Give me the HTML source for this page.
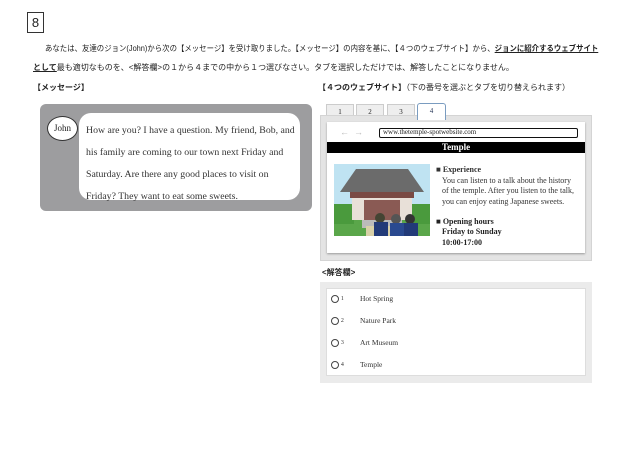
<!DOCTYPE html>
<html><head><meta charset="utf-8"><style>
*{margin:0;padding:0;box-sizing:border-box}
body{width:640px;height:453px;background:#fff;position:relative;overflow:hidden;font-family:"Liberation Sans","Noto Sans CJK JP",sans-serif;color:#222}
.a{position:absolute}
.jp{font-size:8px;white-space:nowrap;line-height:10px}
.serif{font-family:"Liberation Serif","Noto Serif CJK SC",serif}
.row{height:22px;line-height:12px;position:relative}
.rd{display:inline-block;width:8px;height:8px;border:1px solid #444;border-radius:50%;vertical-align:-1px}
</style></head><body>
<div class="a" style="left:27px;top:12px;width:17px;height:21px;border:1px solid #333;font-size:13px;line-height:19px;text-align:center">8</div>
<div class="a jp" style="left:45px;top:44px;transform:scaleX(0.925);transform-origin:0 0">あなたは、友達のジョン(John)から次の【メッセージ】を受け取りました。【メッセージ】の内容を基に、【４つのウェブサイト】から、<b style="text-decoration:underline">ジョンに紹介するウェブサイト</b></div>
<div class="a jp" style="left:33px;top:63px"><b style="text-decoration:underline">として</b>最も適切なものを、&lt;解答欄&gt;の１から４までの中から１つ選びなさい。タブを選択しただけでは、解答したことになりません。</div>
<div class="a jp" style="left:33px;top:83px;font-weight:bold">【メッセージ】</div>
<div class="a jp" style="left:318px;top:83px"><b>【４つのウェブサイト】</b>（下の番号を選ぶとタブを切り替えられます）</div>

<div class="a" style="left:40px;top:104px;width:272px;height:107px;background:#9d9d9f;border-radius:6px"></div>
<div class="a" style="left:79px;top:113px;width:221px;height:87px;background:#fff;border-radius:12px"></div>
<div class="a serif" style="left:47px;top:116px;width:31px;height:25px;background:#fff;border:1px solid #333;border-radius:50%;font-size:9px;line-height:23px;text-align:center">John</div>
<div class="a serif" style="left:86px;top:120px;font-size:9.8px;line-height:22px;color:#333;white-space:nowrap">How are you? I have a question. My friend, Bob, and<br>his family are coming to our town next Friday and<br>Saturday. Are there any good places to visit on<br>Friday? They want to eat some sweets.</div>

<div class="a serif" style="left:326px;top:104px;width:28px;height:14px;background:#eee;border:1px solid #ccc;border-bottom:none;font-size:7px;text-align:center;line-height:14px">1</div>
<div class="a serif" style="left:356px;top:104px;width:28px;height:14px;background:#eee;border:1px solid #ccc;border-bottom:none;font-size:7px;text-align:center;line-height:14px">2</div>
<div class="a serif" style="left:387px;top:104px;width:28px;height:14px;background:#eee;border:1px solid #ccc;border-bottom:none;font-size:7px;text-align:center;line-height:14px">3</div>
<div class="a" style="left:320px;top:115px;width:272px;height:146px;background:#e4e4e4;border:1px solid #d4d4d4"></div>
<div class="a serif" style="left:417px;top:103px;width:29px;height:17px;background:#fff;border:1px solid #7a9cc0;border-bottom:none;border-radius:3px 3px 0 0;font-size:7px;text-align:center;line-height:14px;color:#235">4</div>
<div class="a" style="left:327px;top:122px;width:258px;height:131px;background:#fff;box-shadow:0 1px 2px #999"></div>
<div class="a" style="left:340px;top:127px;font-size:9px;color:#bbb">←&nbsp;&nbsp;→</div>
<div class="a serif" style="left:379px;top:128px;width:199px;height:10px;border:1.5px solid #111;border-radius:2px;font-size:7px;line-height:7px;padding-left:3px">www.thetemple-spotwebsite.com</div>
<div class="a serif" style="left:327px;top:142px;width:258px;height:11px;background:#000;color:#fff;font-weight:bold;font-size:9px;line-height:11px;text-align:center">Temple</div>
<svg class="a" style="left:334px;top:164px" width="96" height="72" viewBox="0 0 96 72">
<rect width="96" height="72" fill="#bfe3f2"/>
<rect y="45" width="96" height="27" fill="#5aa64a"/>
<rect x="0" y="40" width="20" height="20" fill="#4a9a3d"/><rect x="78" y="40" width="18" height="20" fill="#4a9a3d"/>
<polygon points="22,5 74,5 90,28 6,28" fill="#6b6b6b"/>
<rect x="16" y="28" width="64" height="6" fill="#7a4a44"/>
<rect x="18" y="34" width="60" height="22" fill="#e8e0d8"/>
<rect x="30" y="36" width="36" height="20" fill="#8a5a54"/>
<rect x="28" y="56" width="40" height="8" fill="#bbb"/>
<rect x="32" y="62" width="30" height="10" fill="#d8d0a8"/>
<circle cx="46" cy="54" r="5" fill="#443"/><rect x="40" y="58" width="14" height="14" fill="#223a78"/>
<circle cx="62" cy="55" r="5" fill="#555"/><rect x="56" y="59" width="14" height="13" fill="#2a4a90"/>
<circle cx="76" cy="55" r="5" fill="#333"/><rect x="70" y="59" width="14" height="13" fill="#223a78"/>
</svg>
<div class="a serif" style="left:436px;top:165px;font-size:8px;line-height:10.6px;color:#333;white-space:nowrap"><b>■ Experience</b><br>&nbsp;&nbsp;&nbsp;You can listen to a talk about the history<br>&nbsp;&nbsp;&nbsp;of the temple. After you listen to the talk,<br>&nbsp;&nbsp;&nbsp;you can enjoy eating Japanese sweets.</div>
<div class="a serif" style="left:436px;top:217px;font-size:8px;line-height:10.4px;color:#222;font-weight:bold;white-space:nowrap">■ Opening hours<br>&nbsp;&nbsp;&nbsp;Friday to Sunday<br>&nbsp;&nbsp;&nbsp;10:00-17:00</div>

<div class="a jp" style="left:322px;top:268px;font-weight:bold">&lt;解答欄&gt;</div>
<div class="a" style="left:320px;top:282px;width:272px;height:101px;background:#ebebeb"></div>
<div class="a" style="left:326px;top:288px;width:260px;height:88px;background:#fff;border:1px solid #ddd"></div>
<div class="a serif" style="left:331px;top:293px;font-size:7.5px;color:#333;white-space:nowrap">
<div class="row"><span class="rd"></span> <span style="font-size:6px;vertical-align:2px">1</span><span style="position:absolute;left:29px">Hot Spring</span></div>
<div class="row"><span class="rd"></span> <span style="font-size:6px;vertical-align:2px">2</span><span style="position:absolute;left:29px">Nature Park</span></div>
<div class="row"><span class="rd"></span> <span style="font-size:6px;vertical-align:2px">3</span><span style="position:absolute;left:29px">Art Museum</span></div>
<div class="row"><span class="rd"></span> <span style="font-size:6px;vertical-align:2px">4</span><span style="position:absolute;left:29px">Temple</span></div>
</div>
</body></html>
